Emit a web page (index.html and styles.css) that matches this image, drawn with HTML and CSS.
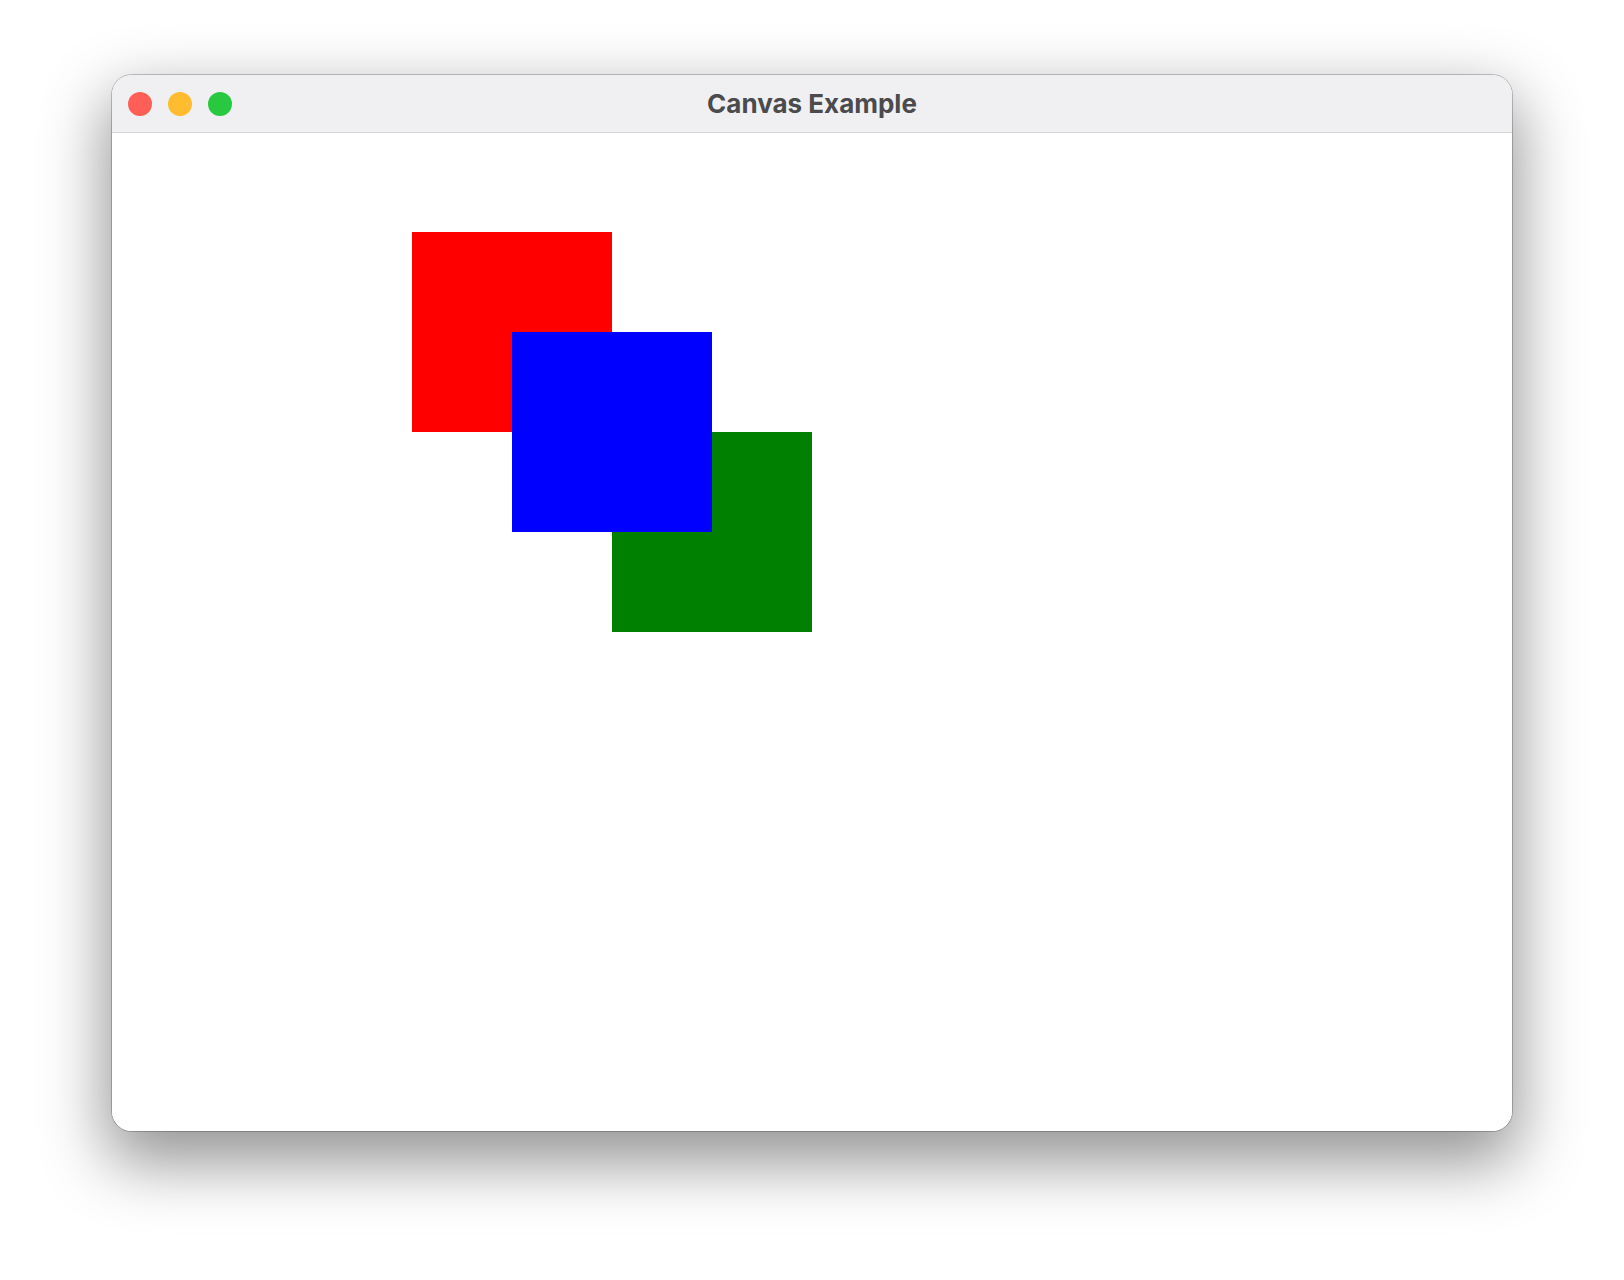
FILE: index.html
```html
<!DOCTYPE html>
<html lang="en">
<head>
<meta charset="utf-8">
<title>Canvas Example</title>
<link rel="stylesheet" href="styles.css">
</head>
<body>
<div class="stage">
  <div class="window">
    <div class="titlebar">
      <div class="lights">
        <span class="light red"></span>
        <span class="light yellow"></span>
        <span class="light green"></span>
      </div>
      <div class="title">Canvas Example</div>
    </div>
    <div class="canvas">
      <div class="sq sq-red"></div>
      <div class="sq sq-blue"></div>
      <div class="sq sq-green"></div>
    </div>
  </div>
</div>
</body>
</html>
```

FILE: styles.css
```css
html, body {
  margin: 0;
  padding: 0;
  background: #ffffff;
}

.stage {
  box-sizing: border-box;
  width: 1624px;
  height: 1280px;
  padding: 75px 0 0 112px;
}

.window {
  width: 1400px;
  height: 1056px;
  border-radius: 20px;
  overflow: hidden;
  background: #ffffff;
  display: flex;
  flex-direction: column;
  box-shadow: 0 0 0 1px rgba(0, 0, 0, 0.22), 0 26px 64px 6px rgba(0, 0, 0, 0.42);
}

.titlebar {
  position: relative;
  height: 57px;
  flex: none;
  background: #f0f0f3;
  border-bottom: 1px solid #d6d6d8;
  display: flex;
  align-items: center;
  justify-content: center;
}

.lights {
  position: absolute;
  left: 16px;
  top: 17px;
  display: flex;
  gap: 16px;
}

.light {
  width: 24px;
  height: 24px;
  border-radius: 50%;
  display: block;
}

.red { background: #ff5f57; }
.yellow { background: #febc2e; }
.green { background: #28c840; }

.title {
  font-family: Inter, "Liberation Sans", sans-serif;
  font-weight: 700;
  font-size: 26px;
  color: #4b4b4d;
  letter-spacing: 0;
  margin-top: -1px;
}

.canvas {
  position: relative;
  flex: 1;
  background: #ffffff;
}

.sq {
  position: absolute;
  width: 200px;
  height: 200px;
}

.sq-red { left: 300px; top: 99px; background: #ff0000; }
.sq-blue { left: 400px; top: 199px; background: #0000ff; z-index: 2; }
.sq-green { left: 500px; top: 299px; background: #008000; z-index: 1; }
```
